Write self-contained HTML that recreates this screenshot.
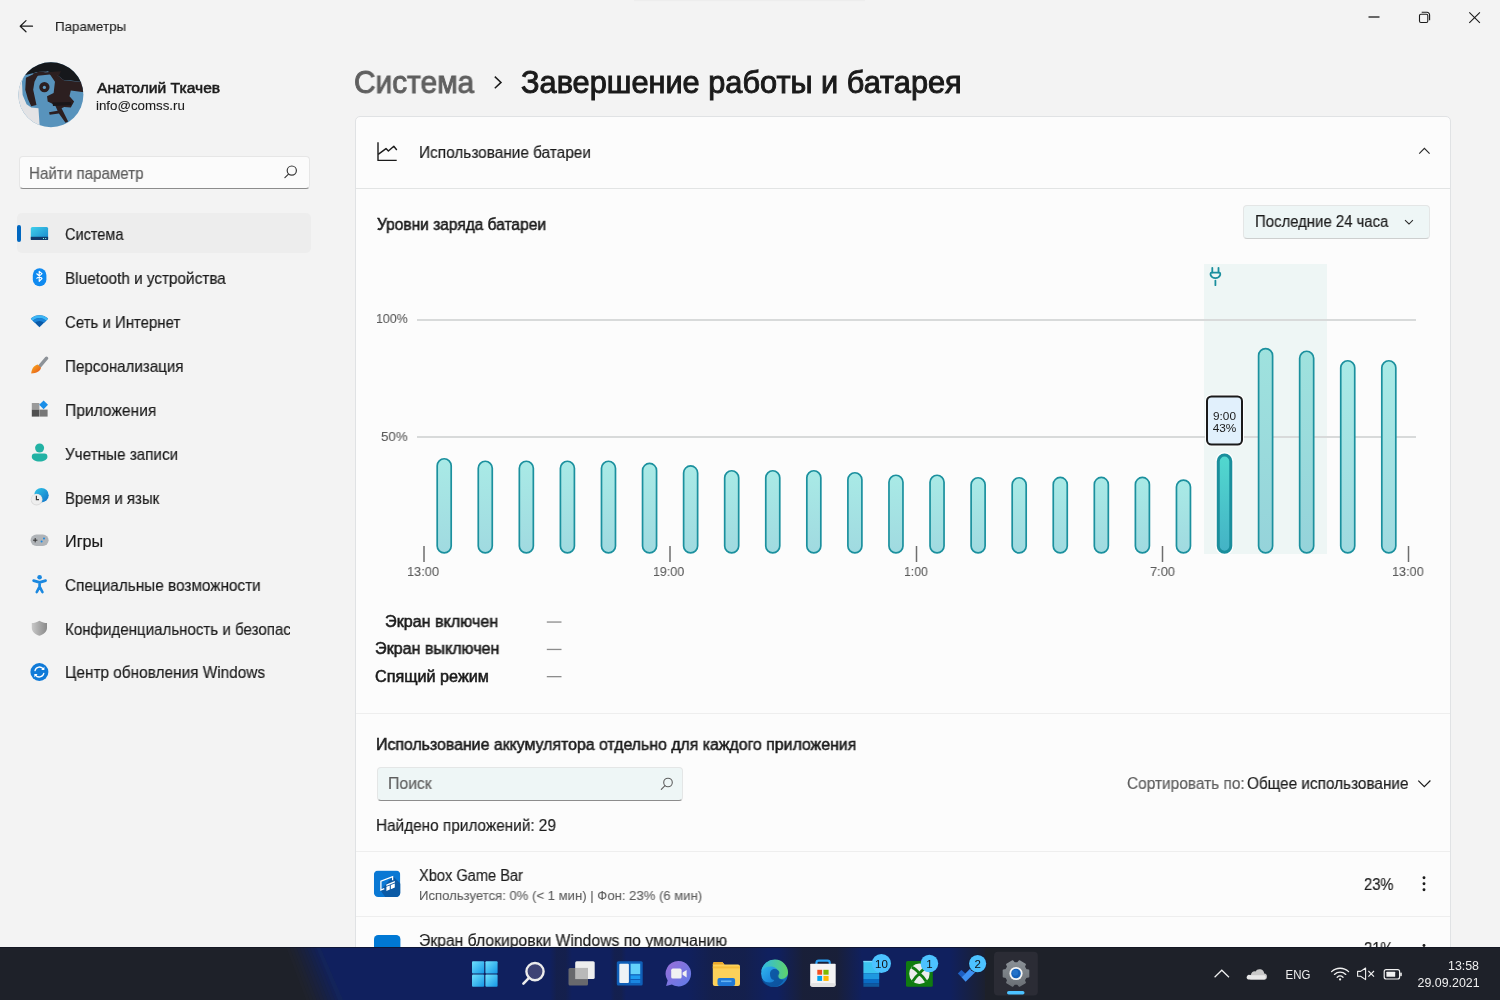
<!DOCTYPE html>
<html><head><meta charset="utf-8">
<style>
html,body{margin:0;padding:0;}
body{width:1500px;height:1000px;overflow:hidden;position:relative;background:#f3f3f3;font-family:"Liberation Sans",sans-serif;color:#1b1b1b;}
.t{position:absolute;white-space:nowrap;line-height:1;transform-origin:0 0;will-change:transform;}
svg{position:absolute;left:0;top:0;}
.dv{position:absolute;left:356px;width:1094px;height:1px;background:#eeeeee;}
</style></head>
<body>
<div style="position:absolute;left:18.5px;top:155.5px;width:291.5px;height:33.5px;background:#fbfbfb;border:1px solid #e6e6e6;border-bottom:1px solid #8c8c8c;border-radius:4px;box-sizing:border-box;"></div>
<div style="position:absolute;left:17px;top:213px;width:294px;height:40px;background:#ededed;border-radius:5px;"></div>
<div style="position:absolute;left:17px;top:224.7px;width:3.6px;height:17.6px;background:#0067c0;border-radius:2px;"></div>
<div style="position:absolute;left:355px;top:116px;width:1096px;height:900px;background:#fcfcfc;border:1px solid #e0e2e4;border-radius:5px;box-sizing:border-box;"></div>
<div class="dv" style="top:188px;background:#e2e4e4;"></div>
<div class="dv" style="top:712.5px;"></div>
<div class="dv" style="top:851px;"></div>
<div class="dv" style="top:915.5px;"></div>
<div style="position:absolute;left:1243.3px;top:204.8px;width:187px;height:34.3px;background:#eef6f6;border:1px solid #e4e6e6;border-bottom-color:#cdcfcf;border-radius:4px;box-sizing:border-box;"></div>
<div style="position:absolute;left:376.8px;top:767px;width:305.8px;height:34px;background:#eef6f6;border:1px solid #e4e6e6;border-bottom:1px solid #8c8c8c;border-radius:4px;box-sizing:border-box;"></div>
<div class="t" style="left:54.62px;top:20.31px;font-size:13.6px;-webkit-text-stroke:0.1px #1b1b1b;transform:scaleX(0.9803);">Параметры</div>
<div class="t" style="left:96.50px;top:79.59px;font-size:15.4px;-webkit-text-stroke:0.55px #1b1b1b;transform:scaleX(1.0149);">Анатолий Ткачев</div>
<div class="t" style="left:95.70px;top:99.46px;font-size:13.3px;-webkit-text-stroke:0.1px #1b1b1b;">info@comss.ru</div>
<div class="t" style="left:29.36px;top:164.81px;font-size:16.2px;-webkit-text-stroke:0.18px #5d5d5d;color:#5d5d5d;transform:scaleX(0.9355);">Найти параметр</div>
<div class="t" style="left:65.20px;top:226.31px;font-size:16.2px;-webkit-text-stroke:0.18px #1b1b1b;transform:scaleX(0.8969);">Система</div>
<div class="t" style="left:65.05px;top:270.31px;font-size:16.2px;-webkit-text-stroke:0.18px #1b1b1b;transform:scaleX(0.9467);">Bluetooth и устройства</div>
<div class="t" style="left:65.17px;top:313.71px;font-size:16.2px;-webkit-text-stroke:0.18px #1b1b1b;transform:scaleX(0.9250);">Сеть и Интернет</div>
<div class="t" style="left:65.47px;top:357.71px;font-size:16.2px;-webkit-text-stroke:0.18px #1b1b1b;transform:scaleX(0.9344);">Персонализация</div>
<div class="t" style="left:65.44px;top:401.71px;font-size:16.2px;-webkit-text-stroke:0.18px #1b1b1b;transform:scaleX(0.9634);">Приложения</div>
<div class="t" style="left:65.46px;top:445.81px;font-size:16.2px;-webkit-text-stroke:0.18px #1b1b1b;transform:scaleX(0.9424);">Учетные записи</div>
<div class="t" style="left:65.47px;top:489.51px;font-size:16.2px;-webkit-text-stroke:0.18px #1b1b1b;transform:scaleX(0.9267);">Время и язык</div>
<div class="t" style="left:65.40px;top:533.21px;font-size:16.2px;-webkit-text-stroke:0.18px #1b1b1b;">Игры</div>
<div class="t" style="left:65.15px;top:577.11px;font-size:16.2px;-webkit-text-stroke:0.18px #1b1b1b;transform:scaleX(0.9473);">Специальные возможности</div>
<div style="position:absolute;left:0;top:0;width:290.2px;height:1000px;overflow:hidden;"><div class="t" style="left:65.47px;top:621.11px;font-size:16.2px;-webkit-text-stroke:0.18px #1b1b1b;transform:scaleX(0.9330);">Конфиденциальность и безопасность</div></div>
<div class="t" style="left:65.45px;top:664.31px;font-size:16.2px;-webkit-text-stroke:0.18px #1b1b1b;transform:scaleX(0.9502);">Центр обновления Windows</div>
<div class="t" style="left:353.62px;top:67.03px;font-size:30.5px;-webkit-text-stroke:0.95px #5f5f5f;color:#5f5f5f;transform:scaleX(0.9787);">Система</div>
<div class="t" style="left:520.59px;top:67.03px;font-size:30.5px;-webkit-text-stroke:0.95px #1a1a1a;color:#1a1a1a;transform:scaleX(1.0071);">Завершение работы и батарея</div>
<div class="t" style="left:419.24px;top:144.68px;font-size:16.0px;-webkit-text-stroke:0.18px #1b1b1b;transform:scaleX(0.9610);">Использование батареи</div>
<div class="t" style="left:376.50px;top:216.31px;font-size:16.2px;-webkit-text-stroke:0.55px #1b1b1b;transform:scaleX(0.9574);">Уровни заряда батареи</div>
<div class="t" style="left:1254.97px;top:213.98px;font-size:16.0px;-webkit-text-stroke:0.18px #1b1b1b;transform:scaleX(0.9317);">Последние 24 часа</div>
<div class="t" style="left:375.99px;top:312.12px;font-size:13.7px;-webkit-text-stroke:0.1px #5b5b5b;color:#5b5b5b;transform:scaleX(0.9059);">100%</div>
<div class="t" style="left:381.33px;top:429.82px;font-size:13.7px;-webkit-text-stroke:0.1px #5b5b5b;color:#5b5b5b;transform:scaleX(0.9731);">50%</div>
<div class="t" style="left:406.97px;top:565.42px;font-size:13.7px;-webkit-text-stroke:0.1px #5b5b5b;color:#5b5b5b;transform:scaleX(0.9333);">13:00</div>
<div class="t" style="left:653.49px;top:565.42px;font-size:13.7px;-webkit-text-stroke:0.1px #5b5b5b;color:#5b5b5b;transform:scaleX(0.9091);">19:00</div>
<div class="t" style="left:903.90px;top:565.42px;font-size:13.7px;-webkit-text-stroke:0.1px #5b5b5b;color:#5b5b5b;transform:scaleX(0.8960);">1:00</div>
<div class="t" style="left:1149.86px;top:565.42px;font-size:13.7px;-webkit-text-stroke:0.1px #5b5b5b;color:#5b5b5b;transform:scaleX(0.9360);">7:00</div>
<div class="t" style="left:1392.38px;top:565.42px;font-size:13.7px;-webkit-text-stroke:0.1px #5b5b5b;color:#5b5b5b;transform:scaleX(0.9242);">13:00</div>
<div class="t" style="left:384.50px;top:613.01px;font-size:16.2px;-webkit-text-stroke:0.55px #1b1b1b;transform:scaleX(0.9955);">Экран включен</div>
<div class="t" style="left:375.01px;top:640.31px;font-size:16.2px;-webkit-text-stroke:0.55px #1b1b1b;transform:scaleX(0.9935);">Экран выключен</div>
<div class="t" style="left:375.10px;top:667.71px;font-size:16.2px;-webkit-text-stroke:0.55px #1b1b1b;">Спящий режим</div>
<div class="t" style="left:375.82px;top:735.81px;font-size:16.2px;-webkit-text-stroke:0.55px #1b1b1b;transform:scaleX(0.9803);">Использование аккумулятора отдельно для каждого приложения</div>
<div class="t" style="left:387.81px;top:776.48px;font-size:16.0px;-webkit-text-stroke:0.18px #5d5d5d;color:#5d5d5d;transform:scaleX(0.9860);">Поиск</div>
<div class="t" style="left:1127.14px;top:775.98px;font-size:16.0px;-webkit-text-stroke:0.18px #5d5d5d;color:#5d5d5d;transform:scaleX(0.9642);">Сортировать по:</div>
<div class="t" style="left:1247.34px;top:775.98px;font-size:16.0px;-webkit-text-stroke:0.18px #1b1b1b;transform:scaleX(0.9575);">Общее использование</div>
<div class="t" style="left:375.93px;top:818.46px;font-size:15.9px;-webkit-text-stroke:0.18px #1b1b1b;transform:scaleX(0.9659);">Найдено приложений: 29</div>
<div class="t" style="left:419.29px;top:868.08px;font-size:16.0px;-webkit-text-stroke:0.18px #1b1b1b;transform:scaleX(0.9133);">Xbox Game Bar</div>
<div class="t" style="left:419.01px;top:888.65px;font-size:13.2px;-webkit-text-stroke:0.1px #5d5d5d;color:#5d5d5d;transform:scaleX(0.9940);">Используется: 0% (&lt; 1 мин) | Фон: 23% (6 мин)</div>
<div class="t" style="left:1363.58px;top:877.18px;font-size:16.0px;-webkit-text-stroke:0.18px #1b1b1b;transform:scaleX(0.9194);">23%</div>
<div class="t" style="left:419.02px;top:932.88px;font-size:16.0px;-webkit-text-stroke:0.18px #1b1b1b;transform:scaleX(0.9821);">Экран блокировки Windows по умолчанию</div>
<div class="t" style="left:1363.58px;top:941.28px;font-size:16.0px;-webkit-text-stroke:0.18px #1b1b1b;transform:scaleX(0.9194);">21%</div>
<svg width="1500" height="1000" viewBox="0 0 1500 1000">
<defs><linearGradient id="bf" x1="0" y1="0" x2="0" y2="1"><stop offset="0" stop-color="#a9eae6"/><stop offset="1" stop-color="#a0dae0"/></linearGradient>
<linearGradient id="bf2" x1="0" y1="0" x2="0" y2="1"><stop offset="0" stop-color="#9fe2de"/><stop offset="1" stop-color="#95d3da"/></linearGradient>
<linearGradient id="bfh" x1="0" y1="0" x2="0" y2="1"><stop offset="0" stop-color="#52d8cf"/><stop offset="1" stop-color="#43b2c5"/></linearGradient></defs>
<rect x="1204" y="264" width="123" height="290" fill="#eef6f5"/>
<rect x="417" y="319" width="999" height="2" fill="#d8dada"/>
<rect x="417" y="436" width="999" height="2" fill="#d8dada"/>
<rect x="423.25" y="546" width="1.5" height="16" fill="#6e6e6e"/>
<rect x="669.25" y="546" width="1.5" height="16" fill="#6e6e6e"/>
<rect x="915.75" y="546" width="1.5" height="16" fill="#6e6e6e"/>
<rect x="1161.75" y="546" width="1.5" height="16" fill="#6e6e6e"/>
<rect x="1407.75" y="546" width="1.5" height="16" fill="#6e6e6e"/>
<rect x="437.20" y="458.75" width="14" height="94.20" rx="7" fill="url(#bf)" stroke="#1b909e" stroke-width="1.7"/>
<rect x="478.27" y="461.25" width="14" height="91.70" rx="7" fill="url(#bf)" stroke="#1b909e" stroke-width="1.7"/>
<rect x="519.34" y="461.25" width="14" height="91.70" rx="7" fill="url(#bf)" stroke="#1b909e" stroke-width="1.7"/>
<rect x="560.41" y="461.25" width="14" height="91.70" rx="7" fill="url(#bf)" stroke="#1b909e" stroke-width="1.7"/>
<rect x="601.48" y="461.25" width="14" height="91.70" rx="7" fill="url(#bf)" stroke="#1b909e" stroke-width="1.7"/>
<rect x="642.55" y="463.45" width="14" height="89.50" rx="7" fill="url(#bf)" stroke="#1b909e" stroke-width="1.7"/>
<rect x="683.62" y="465.95" width="14" height="87.00" rx="7" fill="url(#bf)" stroke="#1b909e" stroke-width="1.7"/>
<rect x="724.69" y="470.75" width="14" height="82.20" rx="7" fill="url(#bf)" stroke="#1b909e" stroke-width="1.7"/>
<rect x="765.76" y="470.75" width="14" height="82.20" rx="7" fill="url(#bf)" stroke="#1b909e" stroke-width="1.7"/>
<rect x="806.83" y="470.75" width="14" height="82.20" rx="7" fill="url(#bf)" stroke="#1b909e" stroke-width="1.7"/>
<rect x="847.90" y="472.75" width="14" height="80.20" rx="7" fill="url(#bf)" stroke="#1b909e" stroke-width="1.7"/>
<rect x="888.97" y="475.25" width="14" height="77.70" rx="7" fill="url(#bf)" stroke="#1b909e" stroke-width="1.7"/>
<rect x="930.04" y="475.25" width="14" height="77.70" rx="7" fill="url(#bf)" stroke="#1b909e" stroke-width="1.7"/>
<rect x="971.11" y="477.75" width="14" height="75.20" rx="7" fill="url(#bf)" stroke="#1b909e" stroke-width="1.7"/>
<rect x="1012.18" y="477.75" width="14" height="75.20" rx="7" fill="url(#bf)" stroke="#1b909e" stroke-width="1.7"/>
<rect x="1053.25" y="477.45" width="14" height="75.50" rx="7" fill="url(#bf)" stroke="#1b909e" stroke-width="1.7"/>
<rect x="1094.32" y="477.45" width="14" height="75.50" rx="7" fill="url(#bf)" stroke="#1b909e" stroke-width="1.7"/>
<rect x="1135.39" y="477.45" width="14" height="75.50" rx="7" fill="url(#bf)" stroke="#1b909e" stroke-width="1.7"/>
<rect x="1176.46" y="480.05" width="14" height="72.90" rx="7" fill="url(#bf)" stroke="#1b909e" stroke-width="1.7"/>
<rect x="1215.53" y="452.00" width="18" height="103.20" rx="9" fill="#ffffff" opacity="0.9"/>
<rect x="1218.28" y="455.00" width="12.5" height="97.20" rx="6.25" fill="url(#bfh)" stroke="#1a8e9c" stroke-width="3"/>
<rect x="1258.60" y="348.65" width="14" height="204.30" rx="7" fill="url(#bf2)" stroke="#1b909e" stroke-width="1.7"/>
<rect x="1299.67" y="351.25" width="14" height="201.70" rx="7" fill="url(#bf2)" stroke="#1b909e" stroke-width="1.7"/>
<rect x="1340.74" y="360.75" width="14" height="192.20" rx="7" fill="url(#bf)" stroke="#1b909e" stroke-width="1.7"/>
<rect x="1381.81" y="360.75" width="14" height="192.20" rx="7" fill="url(#bf)" stroke="#1b909e" stroke-width="1.7"/>
<g fill="none" stroke="#1a8f9e" stroke-width="1.8" stroke-linecap="round"><path d="M1212.3 267.8v4.6M1218.5 267.8v4.6M1215.4 280.6v4.6"/><path d="M1210.6 273.4a0.8 0.8 0 0 1 0.8-0.8h8a0.8 0.8 0 0 1 0.8 0.8v1.6a5.2 5.2 0 0 1 -9.6 0z" stroke-linejoin="round"/></g>
<rect x="1205" y="394.5" width="39" height="52" rx="6" fill="#ffffff" opacity="0.9"/>
<rect x="1207" y="396.5" width="35" height="48" rx="4.5" fill="#e1f0fc" stroke="#1a1a1a" stroke-width="2"/>
<text x="1224.5" y="420" font-family="Liberation Sans" font-size="11.8" fill="#1a1a1a" text-anchor="middle">9:00</text>
<text x="1224.5" y="431.8" font-family="Liberation Sans" font-size="11.8" fill="#1a1a1a" text-anchor="middle">43%</text>
<rect x="634" y="0" width="231" height="1.2" fill="#ededed"/>
<g fill="none" stroke="#1b1b1b" stroke-width="1.2" stroke-linecap="round" stroke-linejoin="round"><path d="M20.2 26.2h12.3M26 20.6l-5.8 5.6 5.8 5.6"/></g>
<path d="M1368.5 17h11" stroke="#1b1b1b" stroke-width="1.3"/>
<g fill="none" stroke="#1b1b1b" stroke-width="1.1"><rect x="1419.5" y="14.2" width="8.3" height="8.3" rx="1.4"/><path d="M1421.7 12.3h5.3a2.6 2.6 0 0 1 2.6 2.6v5.4"/></g>
<path d="M1469.3 12.3l10.6 10.6M1479.9 12.3l-10.6 10.6" stroke="#1b1b1b" stroke-width="1.1"/>
<defs><clipPath id="av"><circle cx="50.9" cy="94.8" r="32.5"/></clipPath></defs>
<g clip-path="url(#av)"><g transform="translate(18,62) scale(0.066)">
<rect x="0" y="0" width="1000" height="1000" fill="#5893bc"/>
<path d="M0 180L90 210L60 300L70 500L130 640L200 690L310 700L330 1000L0 1000Z" fill="#e3e3e5"/>
<path d="M0 0H1000V300L950 300L800 280L700 280L600 200L450 140L300 150L100 200L0 220Z" fill="#16181b"/>
<path d="M120 240L300 150L450 140L300 200L250 300L230 420L280 650L200 670L150 560L110 420Z" fill="#2c1f20"/>
<path d="M450 140L600 200L700 280L950 300L1000 320L1000 460L800 430L780 520L850 600L800 690L700 680L660 700L760 900L720 920L620 780L480 800L470 760L600 740L560 650L450 600L440 520L540 470L560 300L480 180Z" fill="#2c1f20"/>
<path d="M230 170L650 140L620 210L480 190L300 210L240 270Z" fill="#2c1f20"/>
<circle cx="400" cy="380" r="78" fill="#2c1f20"/><circle cx="400" cy="385" r="24" fill="#5f9cc4"/>
<path d="M520 615L800 605L810 650L530 665Z" fill="#1a1618"/>
</g></g>
<g fill="none" stroke="#3a3a3a" stroke-width="1.2"><circle cx="291.8" cy="170.6" r="4.6"/><path d="M288.5 174.1l-3.6 3.6" stroke-linecap="round"/></g>
<path d="M494.8 76.6l6.2 5.8-6.2 5.8" fill="none" stroke="#1b1b1b" stroke-width="1.5"/>
<g fill="none" stroke="#1b1b1b" stroke-width="1.4" stroke-linejoin="round"><path d="M378 142.2v18.2h18.7"/><path d="M378.2 154.4l7.8 -5.8 2.4 2.4 5.4 -4.8 3 3.8"/></g>
<path d="M1419.2 153.6L1424.4 148.3L1429.6 153.6" fill="none" stroke="#2b2b2b" stroke-width="1.15"/>
<path d="M1405 220.1L1409 224L1412.9 220.1" fill="none" stroke="#2b2b2b" stroke-width="1.05"/>
<rect x="546.8" y="621.4" width="14.7" height="1.3" fill="#8c8c8c"/>
<rect x="546.8" y="648.8" width="14.7" height="1.3" fill="#8c8c8c"/>
<rect x="546.8" y="676.0" width="14.7" height="1.3" fill="#8c8c8c"/>
<g fill="none" stroke="#5f5f5f" stroke-width="1.1"><circle cx="668" cy="782.5" r="4.3"/><path d="M665 785.6l-3.7 3.7" stroke-linecap="round"/></g>
<path d="M1418.3 780.6L1424.3 786.6L1430.4 780.5" fill="none" stroke="#1b1b1b" stroke-width="1.2"/>
<defs><clipPath id="xg"><rect x="373.9" y="870.6" width="26.4" height="26.4" rx="4.2"/></clipPath></defs>
<g clip-path="url(#xg)"><rect x="373.9" y="870.6" width="26.4" height="26.4" fill="#0a78d4"/><path d="M380.5 890.4L392.9 876.2L401 884V898H386Z" fill="#0b5aa5"/>
<g fill="none" stroke="#ffffff" stroke-width="1.3" stroke-linejoin="miter"><path d="M384.3 888.6L380.9 890V881.2L392.6 876.6V880.2"/></g>
<path d="M386.3 884.6L394.9 881.0V882.4L386.3 886Z" fill="#ffffff"/>
<path d="M386.4 886.8L389.8 885.4V889.6L386.4 891Z" fill="#ffffff"/><path d="M390.8 885L394.8 883.4V887.6L390.8 889.2Z" fill="#ffffff"/>
</g>
<circle cx="1424" cy="877.7" r="1.45" fill="#1b1b1b"/>
<circle cx="1424" cy="883.7" r="1.45" fill="#1b1b1b"/>
<circle cx="1424" cy="889.7" r="1.45" fill="#1b1b1b"/>
<circle cx="1424" cy="945.5" r="1.45" fill="#1b1b1b"/>
<rect x="374" y="935" width="26.4" height="26.4" rx="4.2" fill="#0078d4"/>
<defs>
<linearGradient id="sysg" x1="0" y1="0" x2="1" y2="1"><stop offset="0" stop-color="#3fd0ec"/><stop offset="1" stop-color="#1a86cc"/></linearGradient>
<linearGradient id="wifig" x1="0" y1="0" x2="0" y2="1"><stop offset="0" stop-color="#38b4f4"/><stop offset="1" stop-color="#0a5aa8"/></linearGradient>
<linearGradient id="brushg" x1="0" y1="0" x2="1" y2="1"><stop offset="0" stop-color="#ffb21e"/><stop offset="1" stop-color="#e0501a"/></linearGradient>
<linearGradient id="shg" x1="0" y1="0" x2="1" y2="0"><stop offset="0" stop-color="#c8c8c8"/><stop offset="0.5" stop-color="#a8a8a8"/><stop offset="1" stop-color="#8a8a8a"/></linearGradient>
<linearGradient id="globeg" x1="0" y1="0" x2="1" y2="1"><stop offset="0" stop-color="#30c8e8"/><stop offset="1" stop-color="#1070c8"/></linearGradient>
</defs>
<rect x="30.8" y="227" width="17.3" height="13" rx="1.5" fill="url(#sysg)"/>
<rect x="30.8" y="236.8" width="17.3" height="3.2" fill="#113a6c"/>
<rect x="43" y="238" width="1" height="1" fill="#9fd"/><rect x="45.2" y="238" width="1" height="1" fill="#9fd"/>
<rect x="32.8" y="268.2" width="13.6" height="18" rx="6.8" fill="#0f8af0"/>
<path d="M36.5 273.5l5.5 5-2.8 2.8v-10l2.8 2.4-5.5 5" fill="none" stroke="#ffffff" stroke-width="1.1" stroke-linejoin="round"/>
<path d="M30.8 318.8A12.5 12.5 0 0 1 48.1 318.8L39.45 327.3Z" fill="#0a5aa8"/>
<path d="M30.8 318.8A12.5 12.5 0 0 1 48.1 318.8L46.2 320.7A9.8 9.8 0 0 0 32.7 320.7Z" fill="#3cb6f6"/>
<path d="M32.7 320.7A9.8 9.8 0 0 1 46.2 320.7L44.1 322.8A6.8 6.8 0 0 0 34.8 322.8Z" fill="#1a84d8"/>
<path d="M46.6 358.2L39.6 366.4" stroke="#8d9298" stroke-width="3.4" stroke-linecap="round"/>
<path d="M37.6 364.6l3.4 3.2c-0.6 3.4-4.4 5.6-9.8 5.6c0.6-4.6 2.6-7.8 6.4-8.8z" fill="url(#brushg)"/>
<rect x="31.8" y="403" width="7.6" height="6.6" fill="#9a9a9a"/>
<rect x="31.8" y="409.6" width="7.6" height="7" fill="#505050"/>
<rect x="39.6" y="409.6" width="8" height="7" fill="#777"/>
<path d="M43.6 400.4l4.4 4.4-4.4 4.4-4.4-4.4z" fill="#1a8ee8"/>
<circle cx="39.6" cy="448" r="4.5" fill="#22b2a4"/>
<path d="M31.8 456.4a3 3 0 0 1 3-3h9.6a3 3 0 0 1 3 3v0.6c0 2.6-3.5 4.6-7.8 4.6s-7.8-2-7.8-4.6z" fill="#22b2a4"/>
<circle cx="41.4" cy="495.2" r="7.3" fill="url(#globeg)"/>
<circle cx="36.6" cy="499.6" r="5.9" fill="#d8d8d8"/><circle cx="36.6" cy="499.2" r="5.3" fill="#eeeeee"/>
<path d="M36.4 495.8v3.8h2.6" fill="none" stroke="#3a3a3a" stroke-width="1.2"/>
<rect x="30.6" y="534.6" width="18" height="11.4" rx="5.7" fill="#b0b4b8"/>
<path d="M33 540.2h4.4M35.2 538v4.4" stroke="#333" stroke-width="1"/>
<circle cx="44" cy="538.4" r="1" fill="#1a88e0"/><circle cx="41.6" cy="541.6" r="1" fill="#1a88e0"/>
<circle cx="39.6" cy="577.2" r="2.3" fill="#1a88e0"/>
<path d="M33.6 580.6l6 1.8 6-1.8M39.6 582.4v4.4M39.6 586.6l-2.8 5.4M39.6 586.6l2.8 5.4" fill="none" stroke="#1a88e0" stroke-width="2.7" stroke-linecap="round" stroke-linejoin="round"/>
<path d="M39.4 620.7c2.6 1.6 5.2 2.4 7.6 2.4v4.6c0 4-3.4 6.8-7.6 8-4.2-1.2-7.6-4-7.6-8v-4.6c2.4 0 5-0.8 7.6-2.4z" fill="url(#shg)"/>
<circle cx="39.4" cy="672" r="9" fill="#0f7ad8"/>
<g fill="none" stroke="#ffffff" stroke-width="1.3" stroke-linecap="round"><path d="M35 670.6a4.6 4.6 0 0 1 8.4-1.4"/><path d="M43.8 673.4a4.6 4.6 0 0 1-8.4 1.4"/></g>
<path d="M44.4 666.8v3.2h-3.2z" fill="#fff"/><path d="M34.4 677.2v-3.2h3.2z" fill="#fff"/>
</svg>
<svg width="1500" height="1000" viewBox="0 0 1500 1000">
<defs>
<linearGradient id="tbg" x1="0" y1="0" x2="1500" y2="0" gradientUnits="userSpaceOnUse"><stop offset="0" stop-color="#1f222b"/><stop offset="0.19" stop-color="#1f222b"/><stop offset="0.6" stop-color="#121f5a"/><stop offset="0.64" stop-color="#131f55"/><stop offset="0.665" stop-color="#1c2030"/><stop offset="1" stop-color="#1d2029"/></linearGradient>
<linearGradient id="startg" x1="0" y1="0" x2="1" y2="1"><stop offset="0" stop-color="#6ee0fc"/><stop offset="1" stop-color="#1597e6"/></linearGradient>
<linearGradient id="edgeg" x1="0" y1="0" x2="1" y2="1"><stop offset="0" stop-color="#35c1f1"/><stop offset="0.5" stop-color="#1f8ee0"/><stop offset="1" stop-color="#0c59a4"/></linearGradient>
<linearGradient id="edgeg2" x1="0" y1="0" x2="1" y2="0"><stop offset="0" stop-color="#2fb8e8"/><stop offset="1" stop-color="#5fd36a"/></linearGradient>
<linearGradient id="chatg" x1="0" y1="0" x2="1" y2="1"><stop offset="0" stop-color="#9a6fd8"/><stop offset="1" stop-color="#5d7be8"/></linearGradient>
<linearGradient id="phg" x1="0" y1="0" x2="0" y2="1"><stop offset="0" stop-color="#4ac4f4"/><stop offset="1" stop-color="#1a72c8"/></linearGradient>
<linearGradient id="gearg" x1="0" y1="0" x2="0" y2="1"><stop offset="0" stop-color="#8a9096"/><stop offset="1" stop-color="#6b7076"/></linearGradient>
</defs>
<rect x="0" y="947" width="1500" height="53" fill="#1e2129"/>
<path d="M319 947L985 947L985 1000L341 1000Z" fill="#10205e"/>
<path d="M286.0 947L289.9 947L310.1 1000L306.0 1000Z" fill="#1f222c"/>
<path d="M289.4 947L293.3 947L313.7 1000L309.6 1000Z" fill="#1e222f"/>
<path d="M292.8 947L296.7 947L317.3 1000L313.2 1000Z" fill="#1d2233"/>
<path d="M296.2 947L300.1 947L320.9 1000L316.8 1000Z" fill="#1b2138"/>
<path d="M299.6 947L303.5 947L324.5 1000L320.4 1000Z" fill="#1a213d"/>
<path d="M303.0 947L306.9 947L328.1 1000L324.0 1000Z" fill="#182142"/>
<path d="M306.4 947L310.3 947L331.7 1000L327.6 1000Z" fill="#162148"/>
<path d="M309.8 947L313.7 947L335.3 1000L331.2 1000Z" fill="#15214e"/>
<path d="M313.2 947L317.1 947L338.9 1000L334.8 1000Z" fill="#132054"/>
<path d="M316.6 947L320.5 947L342.5 1000L338.4 1000Z" fill="#11205b"/>
<path d="M316 947L320 947L343 1000L338 1000Z" fill="#15285a" opacity="0.6"/>
<linearGradient id="band" x1="0" y1="0" x2="1" y2="0"><stop offset="0" stop-color="#1c1f2c" stop-opacity="0"/><stop offset="0.3" stop-color="#1c1f2c" stop-opacity="1"/><stop offset="0.7" stop-color="#1c1f2c" stop-opacity="1"/><stop offset="1" stop-color="#1c1f2c" stop-opacity="0"/></linearGradient>
<rect x="550" y="947" width="22" height="53" fill="url(#band)" opacity="0.35"/>
<rect x="610" y="947" width="16" height="53" fill="url(#band)" opacity="0.3"/>
<rect x="688" y="947" width="80" height="53" fill="url(#band)" opacity="0.35"/>
<rect x="778" y="947" width="84" height="53" fill="url(#band)" opacity="0.75"/>
<linearGradient id="rfade" x1="0" y1="0" x2="1" y2="0"><stop offset="0" stop-color="#1d2029" stop-opacity="0"/><stop offset="1" stop-color="#1d2029" stop-opacity="1"/></linearGradient>
<rect x="950" y="947" width="40" height="53" fill="url(#rfade)"/>
<rect x="0" y="947" width="1500" height="1" fill="#0e1020" opacity="0.6"/>
<rect x="472" y="961.2" width="12.2" height="12.2" rx="1" fill="url(#startg)"/>
<rect x="485.4" y="961.2" width="12.2" height="12.2" rx="1" fill="url(#startg)"/>
<rect x="472" y="974.6" width="12.2" height="12.2" rx="1" fill="url(#startg)"/>
<rect x="485.4" y="974.6" width="12.2" height="12.2" rx="1" fill="url(#startg)"/>
<circle cx="535" cy="971.6" r="8.6" fill="#3e4374" stroke="#ececec" stroke-width="2.4"/>
<path d="M529 977.8l-5.6 5.8" stroke="#ececec" stroke-width="2.6" stroke-linecap="round"/>
<rect x="575.2" y="961.2" width="19.5" height="17.9" rx="1.5" fill="#eeeeee"/>
<rect x="568.5" y="967.9" width="19.5" height="17.6" rx="1.5" fill="#6e6e6e" opacity="0.95"/>
<rect x="575.2" y="967.9" width="12.8" height="11.2" fill="#b9b9b9"/>
<rect x="616.8" y="961.2" width="25.9" height="24.3" rx="1.5" fill="#0f5fb8"/>
<rect x="619.3" y="963.7" width="9.6" height="19.3" rx="1" fill="#eef2f6"/>
<rect x="630.6" y="963.7" width="9.6" height="10.5" fill="#64d2fa"/>
<rect x="630.6" y="975.4" width="9.6" height="3.6" fill="#1e9cf0"/>
<rect x="630.6" y="980" width="9.6" height="3" fill="#1a86e0"/>
<path d="M678.5 961a12.7 12.7 0 1 1 -6.6 23.6l-5.8 1.4 1.6-5.4A12.7 12.7 0 0 1 678.5 961z" fill="url(#chatg)"/>
<rect x="671.2" y="968.6" width="10.4" height="10" rx="1.6" fill="#f2f2f2"/>
<path d="M682.6 972.6l4-2.6v7.4l-4-2.6z" fill="#f2f2f2"/>
<path d="M712.8 964a2 2 0 0 1 2-2h7.5l2.2 2.5h13.5a2 2 0 0 1 2 2V984a2 2 0 0 1 -2 2h-23.2a2 2 0 0 1 -2-2z" fill="#fcd15a"/>
<path d="M712.8 964a2 2 0 0 1 2-2h7.5l2.2 2.5h-11.7z" fill="#e9a82c"/>
<rect x="712.8" y="966.4" width="27.2" height="2" fill="#f6be3c"/>
<rect x="717.5" y="978" width="17.6" height="8" rx="2" fill="#1f78d6"/>
<rect x="721" y="980.5" width="10.5" height="1.6" fill="#64b4f4"/>
<circle cx="774.5" cy="973.4" r="13.4" fill="url(#edgeg)"/>
<path d="M761.3 971.4a13.4 13.4 0 0 1 26.7 1.2c0 3.6 -2.6 6.4 -6.4 6.4c-2.6 0 -4.6 -1.2 -4.6 -3.2c0 -1.4 1.2 -2 1.2 -3.6c0 -3.2 -3.4 -5.8 -7.6 -5.8c-4.4 0 -8 2.2 -9.3 5z" fill="url(#edgeg2)"/>
<path d="M770 973.5c0-2.6 2.2-4.6 4.6-4.6 2.8 0 4.8 1.8 4.8 3.8 0 1.2-1 1.8-1 3.2 0 2.6 2.6 4 5.2 4-1.8 4.2-5.8 7-10.8 7-5.2 0-10.2-3.6-11.4-8.4 2 2.4 5 4 8.2 4 3 0 4.6-1.6 4.6-2.6-2.6 0-4.2-2.4-4.2-6.4z" fill="#0b4f9a" opacity="0.85"/>
<path d="M816.4 966.4V963a2.4 2.4 0 0 1 2.4-2.4h8.6a2.4 2.4 0 0 1 2.4 2.4v3.4" fill="none" stroke="#2ba2f4" stroke-width="2.1"/>
<path d="M810.2 964.6a0.8 0.8 0 0 1 0.8-0.8h23.9a0.8 0.8 0 0 1 0.8 0.8V983.6a3.3 3.3 0 0 1 -3.3 3.3h-18.9a3.3 3.3 0 0 1 -3.3 -3.3z" fill="#f4f4f4"/>
<rect x="810.2" y="983" width="25.5" height="3.9" rx="3" fill="#e2e2e2"/>
<rect x="817.3" y="969.8" width="4.8" height="4.9" fill="#f25022"/><rect x="823.4" y="969.8" width="5.2" height="4.9" fill="#7fba00"/>
<rect x="817.3" y="975.9" width="4.8" height="5" fill="#00a4ef"/><rect x="823.4" y="975.9" width="5.2" height="5" fill="#ffb900"/>
<rect x="863.4" y="960.8" width="15.8" height="12.4" fill="#3cc4f0"/>
<rect x="863.4" y="961" width="15.8" height="1.2" fill="#7ad8f8"/>
<rect x="863.4" y="973.2" width="15.8" height="5.8" fill="#1e98e0"/>
<rect x="863.4" y="979" width="15.8" height="4.6" fill="#0a6cc4"/>
<rect x="863.4" y="983.6" width="15.8" height="3.2" fill="#0f5aa0"/>
<circle cx="881.4" cy="963.5" r="9.6" fill="#4cc2ff"/>
<text x="881.4" y="967.8" font-family="Liberation Sans" font-size="11.5" fill="#111" text-anchor="middle">10</text>
<rect x="906" y="960.9" width="26.8" height="25.9" rx="1.5" fill="#107c10"/>
<circle cx="919.4" cy="973.8" r="10.2" fill="#ececec"/>
<path d="M911.8 967.4c3.4 1 5.6 3.6 7.6 6.2 2-2.6 4.2-5.2 7.6-6.2M912.6 981.6c2.2-3.6 4.2-6 6.8-8 2.6 2 4.6 4.4 6.8 8" fill="none" stroke="#107c10" stroke-width="2.8"/>
<circle cx="929.4" cy="963.5" r="8.8" fill="#4cc2ff"/>
<text x="929.4" y="967.8" font-family="Liberation Sans" font-size="11.5" fill="#111" text-anchor="middle">1</text>
<path d="M957.8 973.6L961.4 970L965.4 973.6L961.8 977.4Z" fill="#1d5fc4"/>
<path d="M961.6 977.2L965.6 981.8L976 971.6L971.4 967.6Z" fill="#3d90f2"/>
<circle cx="977.6" cy="963.6" r="9.4" fill="#151c3c"/><circle cx="977.6" cy="963.6" r="8.6" fill="#4cc2ff"/>
<text x="977.6" y="967.8" font-family="Liberation Sans" font-size="11.5" fill="#111" text-anchor="middle">2</text>
<rect x="994" y="951.8" width="43.8" height="43.7" rx="4" fill="#2b2c35"/>
<rect x="1007" y="991" width="17.5" height="3.5" rx="1.75" fill="#4cc2ff"/>
<path d="M1028.56 970.14 L1028.56 976.86 L1025.90 977.30 L1024.24 980.17 L1025.19 982.69 L1019.36 986.06 L1017.66 983.97 L1014.34 983.97 L1012.64 986.06 L1006.81 982.69 L1007.76 980.17 L1006.10 977.30 L1003.44 976.86 L1003.44 970.14 L1006.10 969.70 L1007.76 966.83 L1006.81 964.31 L1012.64 960.94 L1014.34 963.03 L1017.66 963.03 L1019.36 960.94 L1025.19 964.31 L1024.24 966.83 L1025.90 969.70Z" fill="url(#gearg)" stroke="url(#gearg)" stroke-width="1.5" stroke-linejoin="round"/>
<circle cx="1016" cy="973.5" r="6.6" fill="#f5f5f5"/><circle cx="1016" cy="973.5" r="4.8" fill="#1560b8"/><circle cx="1015.2" cy="972.7" r="3" fill="#2a7ad0" opacity="0.7"/>
<path d="M1214.6 977.2l7.2-7 7.2 7" fill="none" stroke="#f0f0f0" stroke-width="1.2"/>
<path d="M1251 979.6h12.6a3 3 0 0 0 0.6-6 4.8 4.8 0 0 0 -8.8-2.2 3.6 3.6 0 0 0 -4.4 3.4 2.4 2.4 0 0 0 0 4.8z" fill="#c8c8c8"/>
<path d="M1248 979.6h16a2.4 2.4 0 0 0 0.6-4.4h-14a2.4 2.4 0 0 0 -2.6 4.4z" fill="#e8e8e8"/>
<text x="1285.6" y="979" font-family="Liberation Sans" font-size="12" fill="#f0f0f0" textLength="24.8" lengthAdjust="spacingAndGlyphs">ENG</text>
<g fill="none" stroke="#f0f0f0" stroke-width="1.3" stroke-linecap="round"><path d="M1331.6 971.6a12.4 12.4 0 0 1 17 0"/><path d="M1334.4 974.4a8.4 8.4 0 0 1 11.4 0"/><path d="M1337.2 977.2a4.4 4.4 0 0 1 5.8 0"/></g><circle cx="1340.1" cy="979.4" r="1.1" fill="#f0f0f0"/>
<path d="M1357.6 971.4h3l5-3.4v11.6l-5-3.4h-3z" fill="none" stroke="#f0f0f0" stroke-width="1.1" stroke-linejoin="round"/>
<path d="M1368.4 971l5.6 5.6M1374 971l-5.6 5.6" stroke="#f0f0f0" stroke-width="1.1"/>
<rect x="1384.2" y="969.6" width="15.4" height="9.4" rx="2" fill="none" stroke="#f0f0f0" stroke-width="1.2"/>
<rect x="1386.4" y="971.8" width="8.8" height="5" rx="0.5" fill="#f0f0f0"/>
<rect x="1400.2" y="972.4" width="1.6" height="3.8" rx="0.6" fill="#f0f0f0"/>
<text x="1479" y="969.5" font-family="Liberation Sans" font-size="12.4" fill="#f0f0f0" text-anchor="end">13:58</text>
<text x="1479.6" y="987" font-family="Liberation Sans" font-size="12.4" fill="#f0f0f0" text-anchor="end">29.09.2021</text>
</svg>
</body></html>
